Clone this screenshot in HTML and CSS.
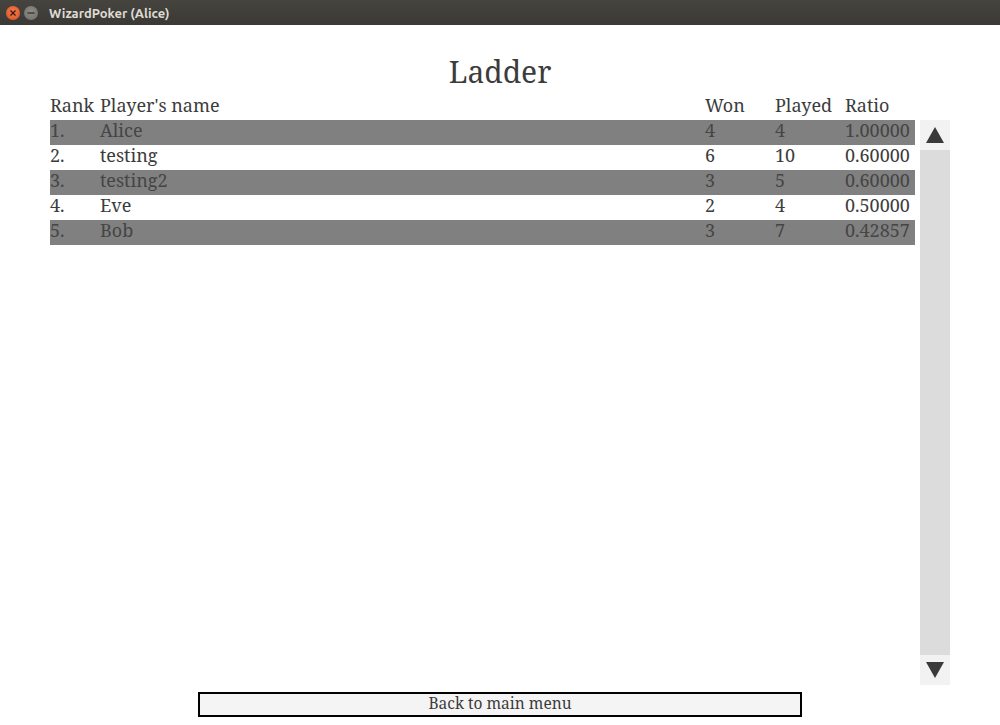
FILE: index.html
```html
<!DOCTYPE html>
<html>
<head>
<meta charset="utf-8">
<link rel="stylesheet" href="styles.css">
</head>
<body>
<div class="titlebar">
  <span class="btn-close"><svg width="14" height="14" viewBox="0 0 14 14"><path d="M4.5 4.5 L9.5 9.5 M9.5 4.5 L4.5 9.5" stroke="#3a1a12" stroke-width="1.3"/></svg></span>
  <span class="btn-min"><svg width="14" height="14" viewBox="0 0 14 14"><path d="M3.5 7 H10.5" stroke="#3c3b37" stroke-width="1.5"/></svg></span>
  <span class="wtitle">WizardPoker (Alice)</span>
</div>
<div class="content">
  <h1 class="title">Ladder</h1>
  <div class="main">
    <div class="table">
      <div class="row head">
        <span class="c-rank">Rank</span><span class="c-name">Player's name</span><span class="c-won">Won</span><span class="c-played">Played</span><span class="c-ratio">Ratio</span>
      </div>
      <div class="row dark"><span class="c-rank">1.</span><span class="c-name">Alice</span><span class="c-won">4</span><span class="c-played">4</span><span class="c-ratio">1.00000</span></div>
      <div class="row"><span class="c-rank">2.</span><span class="c-name">testing</span><span class="c-won">6</span><span class="c-played">10</span><span class="c-ratio">0.60000</span></div>
      <div class="row dark"><span class="c-rank">3.</span><span class="c-name">testing2</span><span class="c-won">3</span><span class="c-played">5</span><span class="c-ratio">0.60000</span></div>
      <div class="row"><span class="c-rank">4.</span><span class="c-name">Eve</span><span class="c-won">2</span><span class="c-played">4</span><span class="c-ratio">0.50000</span></div>
      <div class="row dark"><span class="c-rank">5.</span><span class="c-name">Bob</span><span class="c-won">3</span><span class="c-played">7</span><span class="c-ratio">0.42857</span></div>
    </div>
    <div class="scrollbar">
      <div class="arrow"><svg width="20" height="18" viewBox="0 0 20 18"><path d="M10 1 L19 17 L1 17 Z" fill="#3a3a3a"/></svg></div>
      <div class="track"></div>
      <div class="arrow"><svg width="20" height="18" viewBox="0 0 20 18"><path d="M1 1 L19 1 L10 17 Z" fill="#3a3a3a"/></svg></div>
    </div>
  </div>
  <div class="footer">
    <button class="back">Back to main menu</button>
  </div>
</div>
</body>
</html>
```
FILE: styles.css
```css
html, body {
  margin: 0;
  padding: 0;
  background: #ffffff;
}
body {
  width: 1000px;
  height: 725px;
  overflow: hidden;
  font-family: "Noto Serif", "DejaVu Serif", serif;
  color: #3c3c3c;
}
.titlebar {
  height: 25px;
  background: linear-gradient(#45443f, #3a3935);
  display: flex;
  align-items: center;
  padding-left: 6px;
  gap: 4px;
  box-sizing: border-box;
}
.btn-close, .btn-min {
  width: 14px;
  height: 14px;
  border-radius: 50%;
  display: flex;
}
.btn-close {
  background: radial-gradient(circle at 50% 40%, #f27a4e, #e0501f);
}
.btn-min {
  background: radial-gradient(circle at 50% 40%, #8e8c86, #6f6d68);
}
.wtitle {
  margin-left: 7px;
  font-family: "Ubuntu", "Open Sans", "Noto Sans", sans-serif;
  font-weight: bold;
  font-size: 13px;
  color: #dfdbd2;
}
.content {
  height: 700px;
  display: flex;
  flex-direction: column;
}
.title {
  margin: 0;
  padding-top: 28px;
  height: 68px;
  box-sizing: border-box;
  text-align: center;
  font-weight: normal;
  font-size: 30px;
  line-height: 38px;
  color: #3c3c3c;
}
.main {
  display: flex;
  padding-left: 50px;
  gap: 5px;
  height: 592px;
}
.table {
  width: 865px;
  display: flex;
  flex-direction: column;
}
.row {
  display: flex;
  height: 25px;
  align-items: flex-start;
  font-size: 18px;
  line-height: 21px;
  color: #3c3c3c;
}
.row.head {
  margin-bottom: 2px;
  align-items: center;
  line-height: 25px;
}
.row.dark {
  background: #808080;
  color: #454545;
}
.c-rank { width: 50px; }
.c-name { width: 605px; }
.c-won { width: 70px; }
.c-played { width: 70px; }
.c-ratio { width: 70px; }
.scrollbar {
  margin-top: 27px;
  width: 30px;
  height: 565px;
  display: flex;
  flex-direction: column;
  background: #dcdcdc;
}
.arrow {
  height: 30px;
  background: #f2f2f2;
  display: flex;
  align-items: center;
  justify-content: center;
}
.track {
  flex: 1;
}
.footer {
  display: flex;
  justify-content: center;
  padding-top: 7px;
}
.back {
  width: 604px;
  height: 25px;
  border: 2px solid #000000;
  background: #f4f4f4;
  font-family: "Noto Serif", "DejaVu Serif", serif;
  font-size: 15.5px;
  line-height: 18px;
  color: #3c3c3c;
  padding: 0 0 3px 0;
}
```
